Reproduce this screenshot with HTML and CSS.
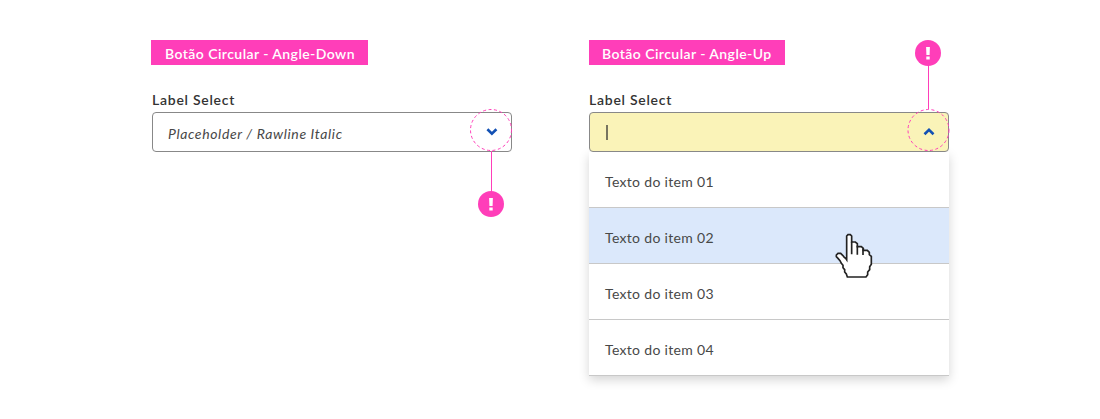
FILE: index.html
```html
<!DOCTYPE html>
<html lang="pt-BR">
<head>
<meta charset="utf-8">
<title>Select - Botão Circular</title>
<link rel="stylesheet" href="styles.css">
</head>
<body>
<main class="board">
  <section class="example">
    <h2 class="tag tag-down"><span class="tag-text">Botão Circular - Angle-Down</span></h2>
    <div class="label"><span>Label Select</span></div>
    <div class="field">
      <span class="placeholder">Placeholder / Rawline Italic</span>
      <svg class="callout callout-down" width="44" height="110" viewBox="0 0 44 110">
        <circle class="ring" cx="22" cy="22" r="20.5"/>
        <path class="angle" d="M18.4 21.2 22.9 25.6 27.4 21.2"/>
        <path class="leader" d="M22.5 43V84"/>
        <circle class="dot" cx="22" cy="96" r="13"/>
        <path class="bang" d="M20.1 90h3.8l-.3 8h-3.2zM20.3 99.5h3.4v2.9h-3.4z"/>
      </svg>
    </div>
  </section>
  <section class="example">
    <h2 class="tag tag-up"><span class="tag-text">Botão Circular - Angle-Up</span></h2>
    <div class="label"><span>Label Select</span></div>
    <div class="field field-active">
      <span class="caret"></span>
      <svg class="callout callout-up" width="44" height="116" viewBox="0 0 44 116">
        <circle class="dot" cx="22" cy="15" r="13"/>
        <path class="bang" d="M20.1 9h3.8l-.3 8h-3.2zM20.3 18.5h3.4v2.9h-3.4z"/>
        <path class="leader" d="M22.5 27V71"/>
        <circle class="ring" cx="22.5" cy="92" r="20.5"/>
        <path class="angle" d="M18.5 96.2 23 91.8 27.5 96.2"/>
      </svg>
    </div>
    <ul class="menu">
      <li class="item"><span>Texto do item 01</span></li>
      <li class="item item-hover"><span>Texto do item 02</span>
        <svg class="cursor" width="44" height="50" viewBox="40 18 132 150">
          <path d="M81 104V33l4-4h7l4 4v18h11l6 5v9h12l6 5v6h12l6 6v7l6 5v24l-5 7v9l-6 7v8l-5 7H83l-3-9-5-6v-7l-5-6v-7l-5-6-4-8-6-7-5-5v-5l5-5h8l6 6 5 6 5 4z"/>
          <path d="M96 50v38M113 62v27M130 70v20"/>
        </svg>
      </li>
      <li class="item"><span>Texto do item 03</span></li>
      <li class="item"><span>Texto do item 04</span></li>
    </ul>
  </section>
</main>
</body>
</html>
```
FILE: styles.css
```css
* { box-sizing: border-box; }
body {
  margin: 0;
  background: #fff;
  color: #333;
  font-family: Lato, "Open Sans", sans-serif;
}
.board {
  display: flex;
  gap: 77px;
  height: 419px;
  padding: 40px 0 0 152px;
}
.example { width: 360px; }
.tag {
  height: 25px;
  margin: 0;
  background: #ff3eb9;
  color: #fff;
  font-size: 14px;
  font-weight: 600;
  line-height: 28px;
  white-space: nowrap;
}
.tag-down { width: 217px; margin-left: -1px; padding-left: 14px; letter-spacing: .44px; }
.tag-up { width: 196px; padding-left: 13px; letter-spacing: .44px; }
.label {
  height: 47px;
  padding-top: 25px;
  font-size: 14px;
  font-weight: 600;
  line-height: 20px;
  letter-spacing: .74px;
}
.field {
  position: relative;
  display: flex;
  align-items: center;
  height: 40px;
  padding: 3px 15px 0;
  border: 1px solid #888;
  border-radius: 4px;
  background: #fff;
}
.field-active { background: #faf3b8; z-index: 2; }
.placeholder { color: #484848; font-size: 14px; font-style: italic; letter-spacing: .63px; }
.caret { width: 2px; height: 15px; margin: -2px 0 0 1px; background: #77745f; }
.callout { position: absolute; overflow: visible; }
.callout-down { left: 316px; top: -5px; }
.callout-up { left: 316px; top: -75px; }
.ring { fill: none; stroke: #ff3eb9; stroke-width: 1; stroke-dasharray: 3 2.5; }
.angle { fill: none; stroke: #1351b4; stroke-width: 2.6; }
.leader { fill: none; stroke: #ff3eb9; stroke-width: 1; }
.dot { fill: #ff3eb9; }
.bang { fill: #fff; }
.menu {
  margin: 0;
  padding: 0;
  list-style: none;
  background: #fff;
  box-shadow: 0 4px 10px rgba(0, 0, 0, .17);
}
.item {
  position: relative;
  height: 56px;
  padding: 20px 16px 0;
  border-bottom: 1px solid #c8c8c8;
  color: #484848;
  font-size: 14px;
  line-height: 20px;
  letter-spacing: .32px;
}
.item-hover { background: #dbe8fb; z-index: 1; }
.cursor { position: absolute; left: 244px; top: 23px; }
.cursor path { fill: #fff; stroke: #222; stroke-width: 5; }
```
